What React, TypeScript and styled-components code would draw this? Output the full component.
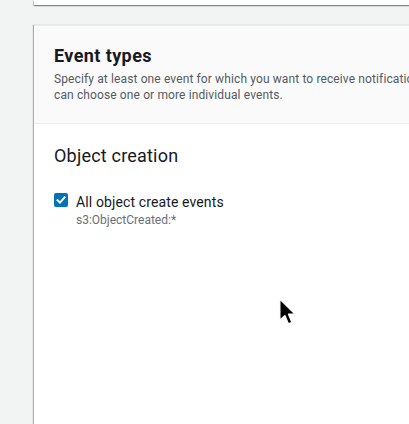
import React from "react";
import styled, { createGlobalStyle } from "styled-components";

const Global = createGlobalStyle`
  html, body { margin: 0; padding: 0; background: #f2f3f3; }
  body { font-family: Roboto, "Noto Sans", sans-serif; color: #16191f; }
  * { box-sizing: border-box; }
`;

const Page = styled.div`
  position: relative;
  width: 409px;
  height: 424px;
  overflow: hidden;
  padding-left: 34px;
  display: flex;
  flex-direction: column;
  gap: 20px;
`;

const TopCard = styled.div`
  height: 5px;
  margin-right: -20px;
  background: #ffffff;
  box-shadow: 0 1px 1px 0 rgba(0, 28, 36, 0.3), 1px 1px 1px 0 rgba(0, 28, 36, 0.15), -1px 1px 1px 0 rgba(0, 28, 36, 0.15);
`;

const Card = styled.section`
  flex: 1;
  margin-right: -20px;
  background: #ffffff;
  border-top: 1px solid #eaeded;
  box-shadow: -1px 0 1px 0 rgba(0, 28, 36, 0.3);
  display: flex;
  flex-direction: column;
`;

const Header = styled.div`
  background: #fafafa;
  border-bottom: 1px solid #eaeded;
  padding: 18px 20px 0 20px;
  height: 98px;
`;

const Title = styled.h2`
  margin: 0;
  font-size: 18px;
  line-height: 24px;
  font-weight: 700;
  letter-spacing: 0.4px;
  color: #16191f;
`;

const Description = styled.p`
  margin: 3px 0 0 0;
  font-size: 12px;
  line-height: 16px;
  letter-spacing: 0.12px;
  color: #545b64;
  white-space: nowrap;
`;

const Body = styled.div`
  padding: 20px 20px 0 20px;
`;

const SectionTitle = styled.h3`
  margin: 0;
  font-size: 18px;
  line-height: 24px;
  font-weight: 400;
  letter-spacing: 0.2px;
  color: #16191f;
`;

const Option = styled.label`
  margin-top: 24px;
  display: flex;
  gap: 8px;
  align-items: flex-start;
`;

const Box = styled.span`
  margin-top: 1px;
  width: 14px;
  height: 14px;
  border-radius: 2px;
  background: #0073bb;
  display: flex;
  align-items: center;
  justify-content: center;
`;

const OptionText = styled.div`
  display: flex;
  flex-direction: column;
`;

const OptionLabel = styled.span`
  font-size: 14px;
  line-height: 20px;
  letter-spacing: 0.12px;
  color: #16191f;
`;

const OptionSub = styled.span`
  font-size: 12px;
  line-height: 16px;
  color: #687078;
`;

const Cursor = styled.svg`
  position: absolute;
  left: 278px;
  top: 297px;
`;

export default function App() {
  return (
    <>
      <Global />
      <Page>
        <TopCard />
        <Card>
          <Header>
            <Title>Event types</Title>
            <Description>
              Specify at least one event for which you want to receive notifications. You
              <br />
              can choose one or more individual events.
            </Description>
          </Header>
          <Body>
            <SectionTitle>Object creation</SectionTitle>
            <Option>
              <Box>
                <svg width="10" height="10" viewBox="0 0 10 10">
                  <path d="M1.5 5.2 L4 7.6 L8.6 2.4" fill="none" stroke="#fff" strokeWidth="2" strokeLinecap="square" />
                </svg>
              </Box>
              <OptionText>
                <OptionLabel>All object create events</OptionLabel>
                <OptionSub>s3:ObjectCreated:*</OptionSub>
              </OptionText>
            </Option>
          </Body>
        </Card>
        <Cursor width="19" height="30" viewBox="0 0 16 25">
          <path d="M1.5 1.5 L1.5 19.5 L5.8 15.6 L8.8 22.6 L11.8 21.3 L8.9 14.4 L14.6 14.4 Z" fill="#000" stroke="#fff" strokeWidth="1.2" strokeLinejoin="round" />
        </Cursor>
      </Page>
    </>
  );
}
